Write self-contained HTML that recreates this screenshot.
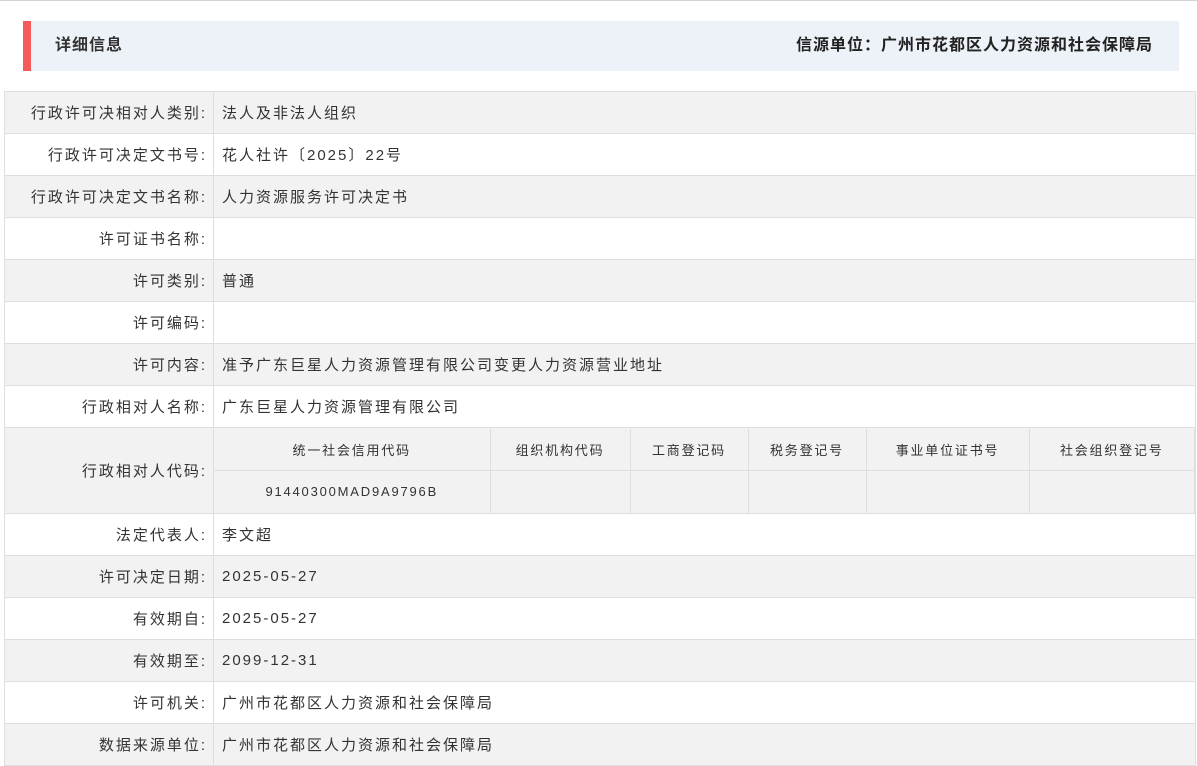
<!DOCTYPE html>
<html><head><meta charset="utf-8"><style>
*{margin:0;padding:0;box-sizing:border-box}
body{width:1197px;height:759px;overflow:hidden;background:#fff;font-family:"Liberation Sans","Noto Sans CJK SC",sans-serif;color:#333;border-top:1px solid #d4d4d4;position:relative}
.hd{position:absolute;left:23px;top:20px;width:1156px;height:50px;background:#edf2f9;border-left:8px solid #f65a5b}
.hd .l{position:absolute;left:24px;top:0;line-height:50px;font-size:16px;font-weight:bold;color:#333;letter-spacing:1px}
.hd .r{position:absolute;right:26px;top:0;line-height:50px;font-size:16px;font-weight:bold;color:#222;letter-spacing:1px}
table.m{position:absolute;left:4px;top:90px;width:1192px;border-collapse:collapse;font-size:15px}
table.m>tbody>tr>td{border:1px solid #dedede;height:42px;padding:0 8px;letter-spacing:2px}
table.m>tbody>tr:nth-child(odd)>td{background:#f2f2f2}
td.k{width:209px;text-align:right;padding-right:6px!important}
td.sub{padding:0!important}
table.s{width:100%;border-collapse:collapse;font-size:13px;background:#f2f2f2;letter-spacing:1.8px}
table.s td{border:1px solid #dedede;height:42px;text-align:center;border-top:none}
table.s tr:last-child td{border-bottom:none}
table.s td:first-child{border-left:none}
table.s td:last-child{border-right:1px solid #dedede}
</style></head><body>
<div class="hd"><span class="l">详细信息</span><span class="r">信源单位：广州市花都区人力资源和社会保障局</span></div>
<table class="m"><tbody>
<tr><td class="k">行政许可决相对人类别:</td><td>法人及非法人组织</td></tr>
<tr><td class="k">行政许可决定文书号:</td><td>花人社许〔2025〕22号</td></tr>
<tr><td class="k">行政许可决定文书名称:</td><td>人力资源服务许可决定书</td></tr>
<tr><td class="k">许可证书名称:</td><td></td></tr>
<tr><td class="k">许可类别:</td><td>普通</td></tr>
<tr><td class="k">许可编码:</td><td></td></tr>
<tr><td class="k">许可内容:</td><td>准予广东巨星人力资源管理有限公司变更人力资源营业地址</td></tr>
<tr><td class="k">行政相对人名称:</td><td>广东巨星人力资源管理有限公司</td></tr>
<tr><td class="k" style="height:86px">行政相对人代码:</td><td class="sub"><table class="s">
<tr><td style="width:276px">统一社会信用代码</td><td style="width:140px">组织机构代码</td><td style="width:118px">工商登记码</td><td style="width:118px">税务登记号</td><td style="width:163px">事业单位证书号</td><td>社会组织登记号</td></tr>
<tr><td>91440300MAD9A9796B</td><td></td><td></td><td></td><td></td><td></td></tr>
</table></td></tr>
<tr><td class="k">法定代表人:</td><td>李文超</td></tr>
<tr><td class="k">许可决定日期:</td><td>2025-05-27</td></tr>
<tr><td class="k">有效期自:</td><td>2025-05-27</td></tr>
<tr><td class="k">有效期至:</td><td>2099-12-31</td></tr>
<tr><td class="k">许可机关:</td><td>广州市花都区人力资源和社会保障局</td></tr>
<tr><td class="k">数据来源单位:</td><td>广州市花都区人力资源和社会保障局</td></tr>
</tbody></table>
</body></html>
